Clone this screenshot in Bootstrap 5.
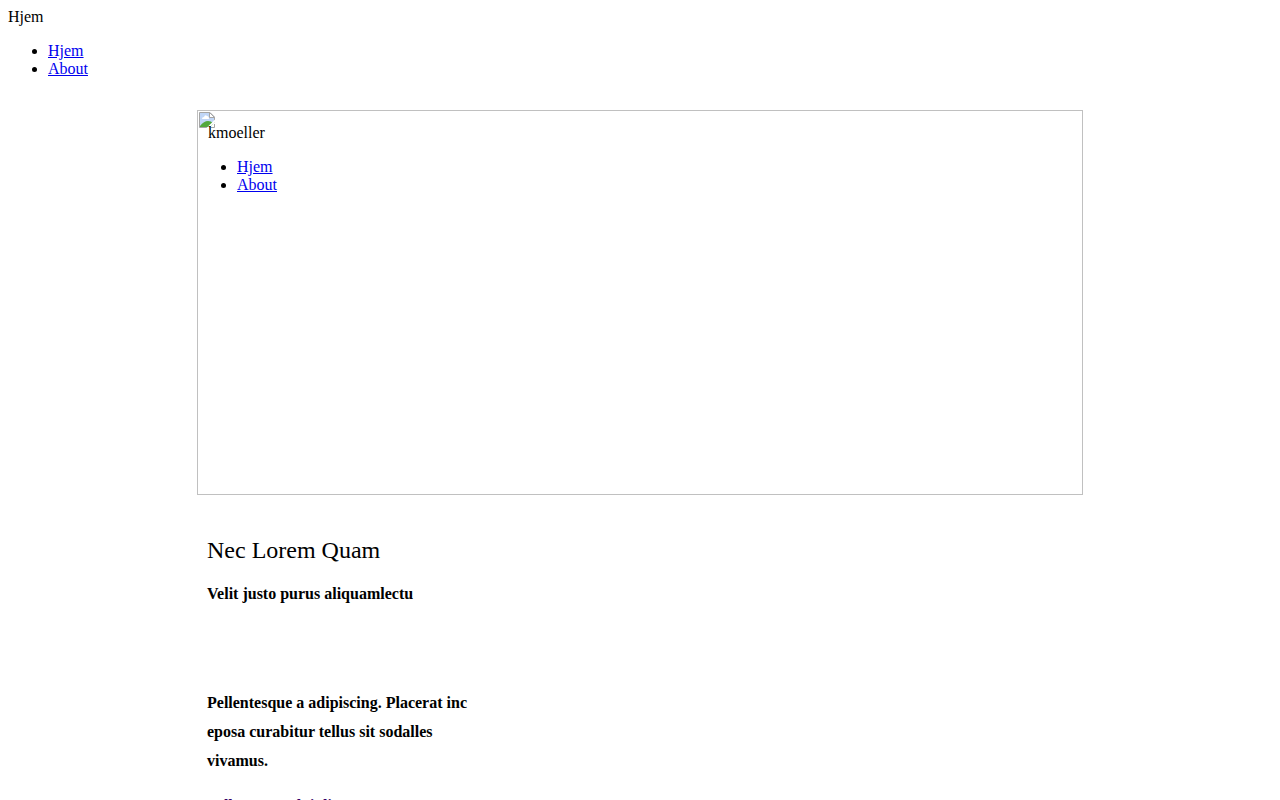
<!DOCTYPE html>
<html lang="da">
<head>
<meta charset="utf-8">
<meta name="viewport" content="width=device-width, initial-scale=1">
<title>Hjem</title>
<link href="https://cdn.jsdelivr.net/npm/bootstrap@5.3.0/dist/css/bootstrap.min.css" rel="stylesheet">
<style>
  body { font: 16px/18px "Liberation Serif", serif; color: #000; background: #fff; }
  a, a:hover { color: #0000ee; }
  .menu { padding-left: 40px; margin: 16px 0; }
  .page { max-width: 886px; }
  .banner { height: 385px; border: 1px solid silver; padding: 13px 10px; }
  .banner .menu { padding-left: 29px; }
  .broken { width: 16px; height: 16px; margin: 1px; }
  .copy { padding: 41px 10px 0; font-weight: 700; }
  .copy h1 { font-size: 24px; line-height: 28px; font-weight: 400; margin-bottom: 21px; }
  .copy h2 { font-size: 16px; line-height: 18px; font-weight: 700; margin-bottom: 85px; }
  .intro { max-width: 270px; line-height: 29px; }
  .intro p { margin-bottom: 16px; }
  .intro .accent { color: #330066; }
</style>
</head>
<body>
<header class="p-2 mb-2">
  <div>Hjem</div>
  <nav aria-label="Mobil">
    <ul class="menu">
      <li><a href="#">Hjem</a></li>
      <li><a href="#about">About</a></li>
    </ul>
  </nav>
</header>
<main class="page mx-auto">
  <section class="banner position-relative">
    <svg class="broken position-absolute top-0 start-0" viewBox="0 0 16 16" aria-hidden="true">
      <path fill="#c0d6f7" stroke="#a5a5a5" d="M.5.5h10.500l4.500 4.500V15.500H.5z"/>
      <path fill="#fff" d="M3 7q0-2 2-2 1-3 3-1 2 0 2 3z"/>
      <path fill="#52a83c" d="M1 15v-1q4-5 8-5 3 0 5 2v4z"/>
      <path fill="#fff" stroke="#a5a5a5" d="M10.500.5v5h5z"/>
      <path fill="#fff" d="M16 7.500 7.500 16h2.500l6-6z"/>
      <path fill="#fff" d="M16 10 10 16h6z"/>
      <path fill="none" stroke="#a5a5a5" d="M15.500 12v3.500H12"/>
    </svg>
    <div class="position-relative">kmoeller</div>
    <nav aria-label="Hovedmenu">
      <ul class="menu">
        <li><a href="#">Hjem</a></li>
        <li><a href="#about">About</a></li>
      </ul>
    </nav>
  </section>
  <section class="copy">
    <h1>Nec Lorem Quam</h1>
    <h2>Velit justo purus aliquamlectu</h2>
    <div class="intro">
      <p>Pellentesque a adipiscing. Placerat inc eposa curabitur tellus sit sodalles vivamus.</p>
      <p class="accent">Pellentesquedui diam</p>
    </div>
  </section>
</main>
<script src="https://cdn.jsdelivr.net/npm/bootstrap@5.3.0/dist/js/bootstrap.bundle.min.js"></script>
</body>
</html>
